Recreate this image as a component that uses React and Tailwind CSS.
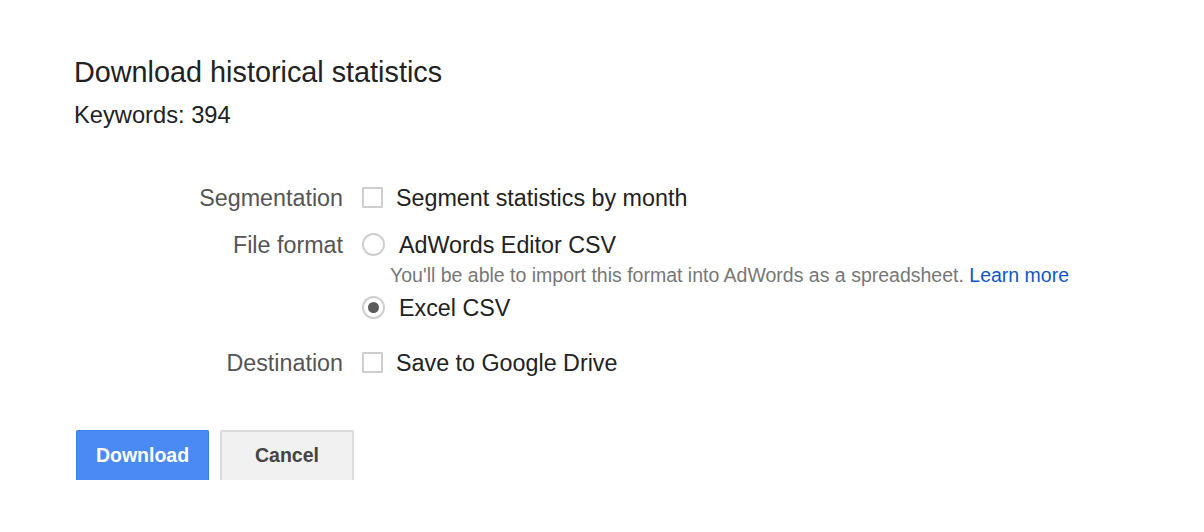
import React from 'react';

const font = "font-['Liberation_Sans',Arial,Helvetica,sans-serif]";

const Checkbox = () => (
  <span className="inline-block w-[21px] h-[21px] border-2 border-[#cfcfcf] bg-white rounded-[1px] shrink-0" />
);

const Radio = ({ checked }) => (
  <span className="flex items-center justify-center w-[23px] h-[23px] rounded-full border-2 border-[#cfcfcf] bg-white shrink-0">
    {checked && <span className="block w-[11px] h-[11px] rounded-full bg-[#5a5a5a]" />}
  </span>
);

const Row = ({ label, children, className = '' }) => (
  <div className={`flex items-center h-[30px] ${className}`}>
    <div className="w-[269px] text-right text-[23.3px] leading-[30px] text-[#555] pt-[1px]">{label}</div>
    <div className="ml-[19px] flex items-center">{children}</div>
  </div>
);

export default function App() {
  return (
    <div className={`${font} bg-white min-h-[532px] pl-[74px] pt-[54px]`}>
      <h1 className="text-[28.8px] leading-[36px] text-[#222]">Download historical statistics</h1>
      <p className="mt-[10px] text-[23.7px] leading-[30px] text-[#222]">Keywords: 394</p>

      <div className="mt-[52px]">
        <Row label="Segmentation">
          <Checkbox />
          <span className="ml-[13px] text-[23.3px] leading-[30px] text-[#222] pt-[1px]">Segment statistics by month</span>
        </Row>

        <Row label="File format" className="mt-[17px]">
          <Radio />
          <span className="ml-[14px] text-[23.3px] leading-[30px] text-[#222] pt-[1px]">AdWords Editor CSV</span>
        </Row>
        <div className="mt-[4px] ml-[316px] text-[19.5px] leading-[24px] text-[#777]">
          You'll be able to import this format into AdWords as a spreadsheet.{' '}
          <a className="text-[#1155cc]" href="#">Learn more</a>
        </div>
        <Row label="" className="mt-[5px]">
          <Radio checked />
          <span className="ml-[14px] text-[23.3px] leading-[30px] text-[#222] pt-[1px]">Excel CSV</span>
        </Row>

        <Row label="Destination" className="mt-[25px]">
          <Checkbox />
          <span className="ml-[13px] text-[23.3px] leading-[30px] text-[#222] pt-[1px]">Save to Google Drive</span>
        </Row>
      </div>

      <div className="mt-[53px] ml-[2px] flex gap-[11px]">
        <button className="w-[133px] h-[50px] bg-[#4a8af4] border border-b-0 border-[#3b7de8] text-white font-bold text-[19.5px] rounded-t-[2px]">
          Download
        </button>
        <button className="w-[134px] h-[50px] bg-[#f1f1f1] border-2 border-b-0 border-[#dcdcdc] text-[#444] font-bold text-[19.5px] rounded-t-[2px]">
          Cancel
        </button>
      </div>
    </div>
  );
}
